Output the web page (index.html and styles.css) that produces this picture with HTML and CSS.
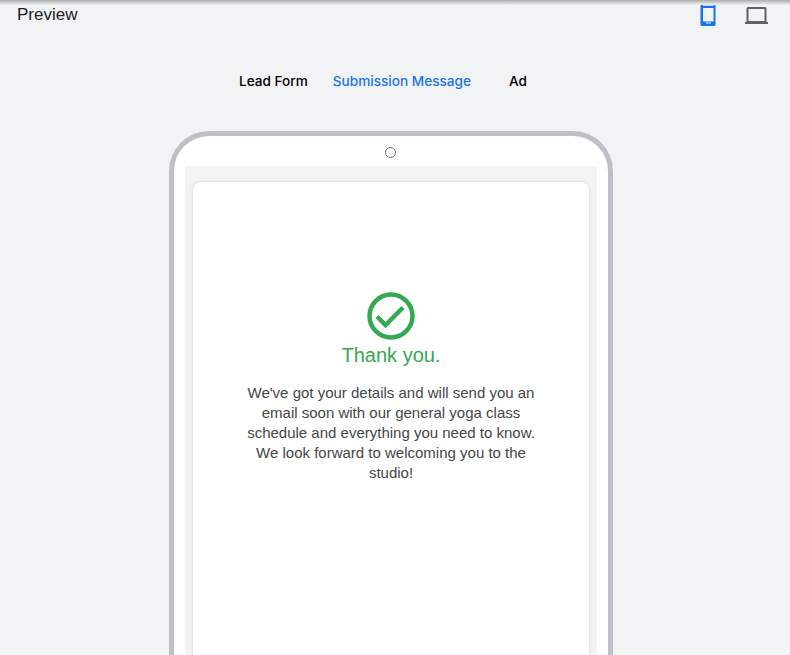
FILE: index.html
```html
<!DOCTYPE html>
<html lang="en">
	<head>
		<meta charset="UTF-8" />
		<title>Preview</title>
		<link rel="stylesheet" href="styles.css">
	</head>

	<body>
		<div class="top-shadow"></div>
		<header class="preview-header">
			<div class="preview-title">Preview</div>
			<div class="device-icons">
				<svg class="device-icon mobile" width="24" height="24" viewBox="0 0 24 24">
					<path fill="#1a73e8" d="M5 1h12a1.500 1.500 0 0 1 1.500 1.500v19a1.500 1.500 0 0 1-1.500 1.500H5a1.500 1.500 0 0 1-1.500-1.500v-19A1.500 1.500 0 0 1 5 1zM6 5v13.500h10.500V5zM6 2.300v.7h10.500v-.7zM9 19.500v1h5v-1z" fill-rule="evenodd"/>
				</svg>
				<svg class="device-icon laptop" width="24" height="24" viewBox="0 0 24 24">
					<path fill="#5f6368" d="M3 4h17a1.500 1.500 0 0 1 1.500 1.500V19H1.500V5.500A1.500 1.500 0 0 1 3 4zM3.500 6v12h16V6zM0 19h23v2H0z" fill-rule="evenodd"/>
				</svg>
			</div>
		</header>
		<nav class="tabs">
			<div class="tab tab-lead">Lead Form</div>
			<div class="tab tab-active">Submission Message</div>
			<div class="tab tab-ad">Ad</div>
		</nav>
		<div class="phone">
			<div class="camera-row">
				<div class="camera"></div>
			</div>
			<div class="screen">
				<div class="card">
					<svg class="check" width="48" height="48" viewBox="0 0 48 48">
						<circle cx="24" cy="24" r="21.500" fill="none" stroke="#34a853" stroke-width="4.500"/>
						<path d="M10 24.500l8.500 8.500 17.500-17.500" fill="none" stroke="#34a853" stroke-width="4.500"/>
					</svg>
					<div class="thanks">Thank you.</div>
					<p class="message">We've got your details and will send you an email soon with our general yoga class schedule and everything you need to know. We look forward to welcoming you to the studio!</p>
				</div>
			</div>
		</div>
	</body>
</html>
```

FILE: styles.css
```css
html, body {
	margin: 0;
	padding: 0;
	height: 100%;
	overflow: hidden;
}

body {
	background-color: #f1f3f4;
	font-family: "Liberation Sans", Arial, sans-serif;
	position: relative;
	display: flex;
	flex-direction: column;
}

.top-shadow {
	position: absolute;
	top: 0;
	left: 0;
	right: 0;
	height: 5px;
	background: linear-gradient(#a9abae, #f1f3f4);
}

.preview-header {
	display: flex;
	justify-content: space-between;
	align-items: flex-start;
	height: 66px;
	padding: 3px 21px 0 17px;
}

.preview-title {
	margin-top: 3px;
	font-size: 17px;
	line-height: 18px;
	color: #202124;
}

.device-icons {
	display: flex;
	gap: 24px;
}

.tabs {
	display: flex;
	height: 24px;
	align-items: center;
	font-family: Inter, Roboto, sans-serif;
	font-size: 13.600px;
	font-weight: 500;
	color: #000;
}

.tab-lead {
	margin-left: 239px;
}

.tab-active {
	margin-left: 25px;
	color: #1a73e8;
}

.tab-ad {
	margin-left: 38px;
}

.phone {
	box-sizing: border-box;
	flex: 1;
	min-height: 0;
	display: flex;
	flex-direction: column;
	width: 444px;
	margin: 38px 0 0 169px;
	border: 5px solid #bdc1c6;
	border-bottom: 0;
	border-radius: 40px 40px 0 0;
	background-color: #fff;
	padding: 0 11px;
}

.camera-row {
	display: flex;
	justify-content: center;
	align-items: center;
	height: 30px;
	padding: 3px 1px 0 0;
	box-sizing: border-box;
}

.camera {
	box-sizing: border-box;
	width: 11px;
	height: 11px;
	border: 1px solid #70757a;
	border-radius: 50%;
}

.screen {
	flex: 1;
	min-height: 0;
	display: flex;
	flex-direction: column;
	background-color: #f1f3f4;
	padding: 16px 8px 0;
}

.card {
	flex: 1;
	display: flex;
	flex-direction: column;
	align-items: center;
	padding-top: 110px;
	background-color: #fff;
	border-radius: 8px 8px 0 0;
	box-shadow: 0 0 3px rgba(60, 64, 67, 0.2);
}

.thanks {
	margin-top: 3px;
	font-size: 20px;
	line-height: 24px;
	color: #34a853;
}

.message {
	width: 300px;
	margin: 16px 0 0;
	font-size: 15px;
	line-height: 20px;
	text-align: center;
	color: #444746;
}
```
